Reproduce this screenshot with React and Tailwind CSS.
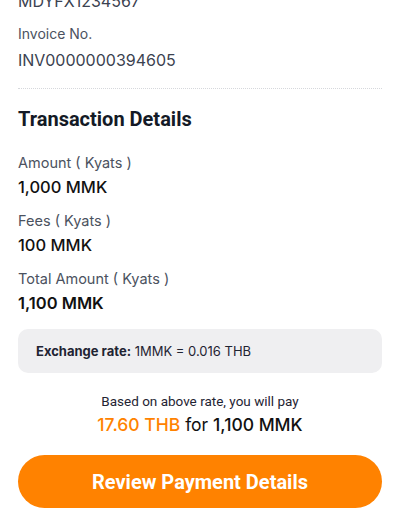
import React from 'react';

const details = [
  { label: 'Amount ( Kyats )', value: '1,000 MMK', weight: 'font-medium' },
  { label: 'Fees ( Kyats )', value: '100 MMK', weight: 'font-medium' },
  { label: 'Total Amount ( Kyats )', value: '1,100 MMK', weight: 'font-semibold' },
];

function App() {
  return (
    <div className="w-[400px] h-[520px] overflow-hidden bg-white px-[18px] font-['Inter',sans-serif]">
      {/* Invoice info (scrolled) */}
      <p className="-mt-[11px] text-[16px] leading-[24px] text-[#3b4250]">MDYFX1234567</p>
      <p className="mt-[11px] text-[14px] leading-[20px] text-[#4b5260]">Invoice No.</p>
      <p className="mt-[4px] text-[16px] leading-[24px] text-[#3b4250]">INV0000000394605</p>

      <div className="mt-[16px] border-t border-dotted border-[#d6d8dc]"></div>

      {/* Transaction details */}
      <h2 className="pt-4 font-['Roboto',sans-serif] text-[20px] leading-[28px] font-bold text-[#141a26]">Transaction Details</h2>

      <div className="mt-5 flex flex-col gap-3">
        {details.map((d) => (
          <div key={d.label} className="flex flex-col gap-0.5">
            <span className="text-[14.5px] leading-[20px] text-[#4b5260]">{d.label}</span>
            <span className={`text-[16.5px] leading-[24px] text-[#111111] ${d.weight}`}>{d.value}</span>
          </div>
        ))}
      </div>

      <div className="mt-[14px] rounded-[10px] bg-[#efeff1] px-[18px] py-3 text-[13px] leading-5 text-[#1f2433]">
        <span className="font-bold">Exchange rate:</span> 1MMK = 0.016 THB
      </div>

      <div className="mt-[18px] text-center">
        <p className="font-['Roboto',sans-serif] text-[13.5px] leading-[20px] text-[#1f2433]">Based on above rate, you will pay</p>
        <p className="mt-[2px] text-[17.5px] leading-[24px] text-[#111111]">
          <span className="font-medium text-[#ff8200]">17.60 THB</span> for{' '}
          <span className="font-medium">1,100 MMK</span>
        </p>
      </div>

      <button className="mt-[18px] h-[53px] w-full rounded-full bg-[#ff8200] font-['Roboto',sans-serif] text-[20px] font-bold text-white">
        Review Payment Details
      </button>
    </div>
  );
}

export default App;
